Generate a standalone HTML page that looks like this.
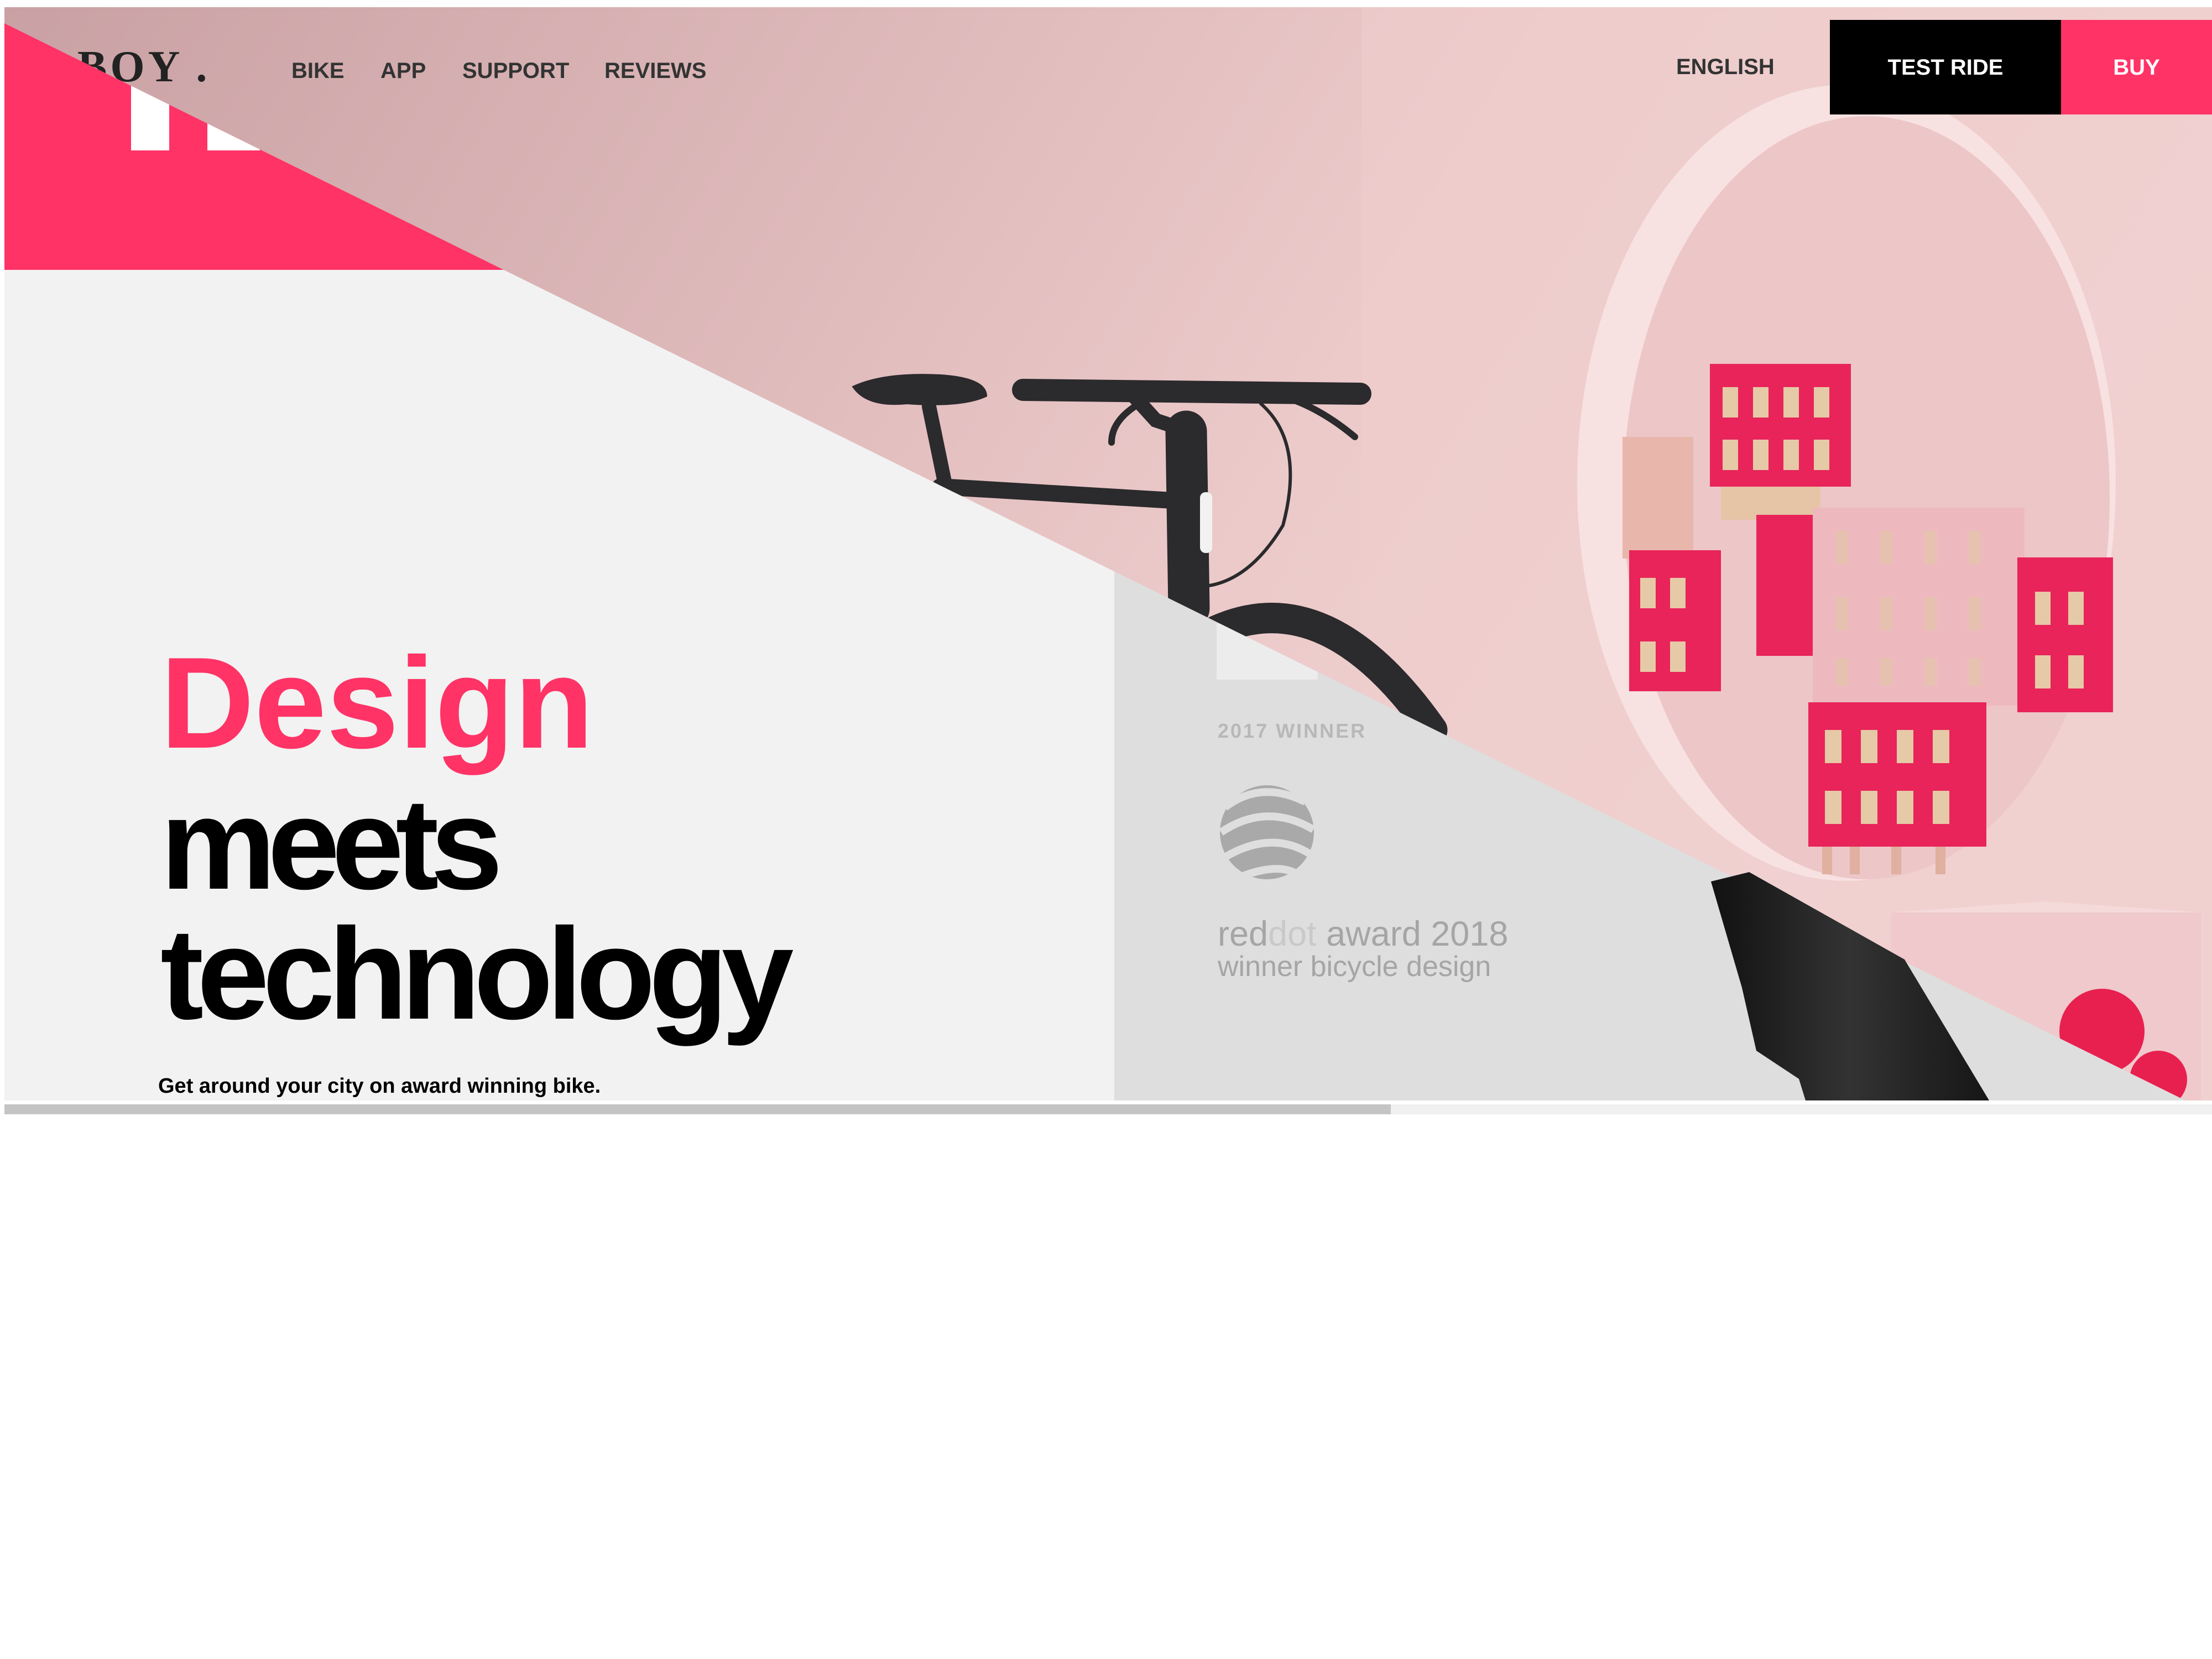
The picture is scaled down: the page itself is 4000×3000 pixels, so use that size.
<!DOCTYPE html>
<html><head><meta charset="utf-8">
<style>
html,body{margin:0;padding:0;background:#fff;width:4000px;height:3000px;overflow:hidden;position:relative;font-family:"Liberation Sans",sans-serif;}
.a{position:absolute;white-space:nowrap;line-height:1;}
.nav{font-weight:bold;font-size:40px;color:#333;top:108px;}
.h{font-weight:bold;font-size:235px;left:290px;}
</style></head><body>
<svg class="a" style="left:0;top:0" width="4000" height="3000" viewBox="0 0 4000 3000">
<defs>
<clipPath id="above"><polygon points="8,13 4000,13 4000,1990 3952,1990 8,42"/></clipPath>
<clipPath id="below"><polygon points="8,42 3952,1990 8,1990"/></clipPath>
<linearGradient id="bg" x1="0" y1="0" x2="1" y2="0.3">
<stop offset="0" stop-color="#c9a1a4"/><stop offset="0.4" stop-color="#dfbabb"/><stop offset="0.65" stop-color="#eccaca"/><stop offset="1" stop-color="#f2d3d3"/></linearGradient>
<linearGradient id="blk" x1="0" y1="0" x2="1" y2="0"><stop offset="0" stop-color="#111"/><stop offset="0.5" stop-color="#333"/><stop offset="1" stop-color="#161616"/></linearGradient>
</defs>
<rect x="8" y="13" width="3992" height="1977" fill="#f2f2f2"/>
<polygon points="2015,1033 3952,1990 2015,1990" fill="#dedede"/>
<polygon points="2200,1128 2383,1128 2383,1229 2200,1229" fill="#ececec" clip-path="url(#below)"/>
<g clip-path="url(#above)">
<rect x="8" y="13" width="3992" height="1977" fill="url(#bg)"/>
<rect x="2462" y="13" width="1538" height="1977" fill="#efcdcd" opacity="0.5"/>
<ellipse cx="3339" cy="873" rx="487" ry="720" fill="#f8e1e1"/>
<ellipse cx="3375" cy="900" rx="440" ry="690" fill="#edc6c8"/>
<rect x="2934" y="790" width="128" height="220" fill="#e9b6ab"/>
<rect x="2946" y="995" width="166" height="255" fill="#e8245a"/>
<g fill="#e6c9a6"><rect x="2966" y="1045" width="28" height="55"/><rect x="3020" y="1045" width="28" height="55"/><rect x="2966" y="1160" width="28" height="55"/><rect x="3020" y="1160" width="28" height="55"/></g>
<rect x="3092" y="658" width="255" height="222" fill="#e8245a"/>
<g fill="#e6c9a6"><rect x="3115" y="700" width="28" height="55"/><rect x="3170" y="700" width="28" height="55"/><rect x="3225" y="700" width="28" height="55"/><rect x="3280" y="700" width="28" height="55"/><rect x="3115" y="795" width="28" height="55"/><rect x="3170" y="795" width="28" height="55"/><rect x="3225" y="795" width="28" height="55"/><rect x="3280" y="795" width="28" height="55"/></g>
<rect x="3112" y="880" width="180" height="60" fill="#e6c4a6"/>
<rect x="3176" y="931" width="102" height="255" fill="#e8245a"/>
<rect x="3278" y="918" width="383" height="358" fill="#eeb9be"/>
<g fill="#e5c4ad" opacity="0.8"><rect x="3320" y="960" width="22" height="60"/><rect x="3400" y="960" width="22" height="60"/><rect x="3480" y="960" width="22" height="60"/><rect x="3560" y="960" width="22" height="60"/><rect x="3320" y="1080" width="22" height="60"/><rect x="3400" y="1080" width="22" height="60"/><rect x="3480" y="1080" width="22" height="60"/><rect x="3560" y="1080" width="22" height="60"/><rect x="3320" y="1190" width="22" height="50"/><rect x="3400" y="1190" width="22" height="50"/><rect x="3480" y="1190" width="22" height="50"/><rect x="3560" y="1190" width="22" height="50"/></g>
<rect x="3648" y="1008" width="173" height="280" fill="#e8245a"/>
<g fill="#e6c9a6"><rect x="3680" y="1070" width="28" height="60"/><rect x="3740" y="1070" width="28" height="60"/><rect x="3680" y="1185" width="28" height="60"/><rect x="3740" y="1185" width="28" height="60"/></g>
<rect x="3270" y="1270" width="322" height="261" fill="#e8245a"/>
<g fill="#e6c9a6"><rect x="3300" y="1320" width="30" height="60"/><rect x="3365" y="1320" width="30" height="60"/><rect x="3430" y="1320" width="30" height="60"/><rect x="3495" y="1320" width="30" height="60"/><rect x="3300" y="1430" width="30" height="60"/><rect x="3365" y="1430" width="30" height="60"/><rect x="3430" y="1430" width="30" height="60"/><rect x="3495" y="1430" width="30" height="60"/></g>
<g fill="#e0b0a0"><rect x="3295" y="1531" width="18" height="50"/><rect x="3345" y="1531" width="18" height="50"/><rect x="3420" y="1531" width="18" height="50"/><rect x="3500" y="1531" width="18" height="50"/></g>
<polygon points="3420,1650 3980,1650 3980,1990 3420,1990" fill="#efc9cb"/>
<polygon points="3420,1650 3700,1630 3980,1650" fill="#f5dada"/>
<circle cx="3801" cy="1865" r="77" fill="#e8204f"/>
<circle cx="3903" cy="1952" r="52" fill="#e8204f"/>
<g stroke="#2b2a2d" fill="none" stroke-linecap="round">
<path d="M1545 700 Q1600 675 1700 680 Q1780 685 1782 715 Q1740 735 1640 728 Q1570 735 1545 700Z" fill="#2b2a2d" stroke-width="6"/>
<path d="M1680 735 L1712 890" stroke-width="26"/>
<path d="M1700 880 L2120 905" stroke-width="30"/>
<path d="M1850 705 L2460 712" stroke-width="40"/>
<path d="M2040 705 L2090 760 L2120 770" stroke-width="26"/>
<path d="M2145 780 L2150 1100" stroke-width="75"/>
<path d="M2060 730 Q2010 760 2010 800" stroke-width="12"/>
<path d="M2330 720 Q2390 740 2450 790" stroke-width="12"/>
<path d="M2280 730 Q2360 800 2320 950 Q2260 1050 2180 1060" stroke-width="6"/>
<path d="M2200 1140 Q2400 1050 2590 1320" stroke-width="55"/>
</g>
<rect x="2170" y="890" width="22" height="110" rx="10" fill="#f2f2f2"/>
</g>
<g clip-path="url(#below)">
<rect x="8" y="42" width="903" height="446" fill="#ff3366"/>
<rect x="237" y="0" width="69" height="272" fill="#fff"/>
<rect x="375" y="0" width="95" height="272" fill="#fff"/>
</g>
<polygon points="3094,1594 3163,1577 3444,1735 3597,1990 3265,1990 3253,1951 3176,1900 3150,1786" fill="url(#blk)"/>
<circle cx="2291" cy="1505" r="85" fill="#a9a9a9"/>
<g stroke="#dedede" stroke-width="14" fill="none">
<path d="M2215 1460 Q2280 1410 2360 1450"/>
<path d="M2208 1505 Q2290 1450 2375 1500"/>
<path d="M2215 1550 Q2300 1500 2370 1545"/>
<path d="M2245 1585 Q2310 1560 2345 1580"/>
</g>
<rect x="8" y="1997" width="2507" height="18" fill="#c4c4c4"/>
<rect x="2515" y="1997" width="1485" height="18" fill="#f0f0f0"/>
</svg>

<svg class="a" style="left:0;top:0" width="1000" height="500"><defs><clipPath id="ab2"><polygon points="0,0 1000,0 1000,532 0,38"/></clipPath></defs><text x="140" y="147" font-family="Liberation Serif" font-weight="bold" font-size="80" letter-spacing="6" fill="#222" clip-path="url(#ab2)">BOY .</text></svg>

<div class="a nav" style="left:527px">BIKE</div>
<div class="a nav" style="left:688px">APP</div>
<div class="a nav" style="left:836px">SUPPORT</div>
<div class="a nav" style="left:1093px">REVIEWS</div>
<div class="a nav" style="left:3031px;top:101px">ENGLISH</div>
<div class="a" style="left:3309px;top:36px;width:418px;height:171px;background:#000;color:#fff;font-weight:bold;font-size:40px;display:flex;align-items:center;justify-content:center;line-height:1">TEST RIDE</div>
<div class="a" style="left:3727px;top:36px;width:273px;height:171px;background:#ff3366;color:#fff;font-weight:bold;font-size:40px;display:flex;align-items:center;justify-content:center;line-height:1">BUY</div>

<div class="a h" style="top:1153px;color:#ff3366;letter-spacing:0px">Design</div>
<div class="a h" style="top:1408px;color:#000;letter-spacing:-15px">meets</div>
<div class="a h" style="top:1643px;color:#000;letter-spacing:-12px">technology</div>
<div class="a" style="left:286px;top:1945px;font-weight:bold;font-size:38px;color:#000">Get around your city on award winning bike.</div>

<div class="a" style="left:2202px;top:1304px;font-weight:bold;font-size:36px;color:#b8b8b8;letter-spacing:3px">2017 WINNER</div>
<div class="a" style="left:2202px;top:1658px;font-size:63px;color:#a5a5a5">red<span style="color:#c9c9c9">dot</span> award 2018</div>
<div class="a" style="left:2202px;top:1722px;font-size:52px;color:#a5a5a5;letter-spacing:0px">winner bicycle design</div>
</body></html>
